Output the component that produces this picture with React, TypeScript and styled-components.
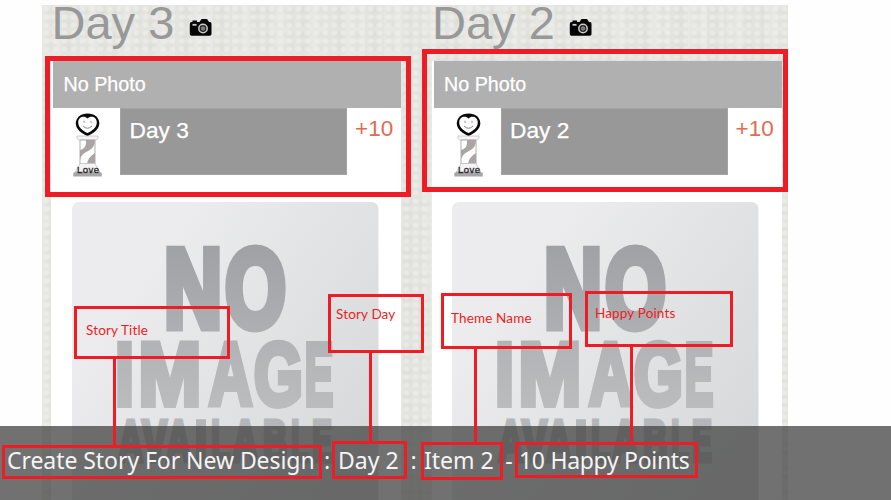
import React from "react";
import styled, { createGlobalStyle } from "styled-components";

const RED = "#ee1c25";

const GlobalStyle = createGlobalStyle`
  html, body { margin: 0; padding: 0; background: #fff; }
  * { box-sizing: border-box; }
`;

const Page = styled.main`
  position: relative;
  width: 891px;
  height: 500px;
  overflow: hidden;
  background: #fefefe;
  padding: 5px 0 0 42px;
  font-family: "Liberation Sans", Arial, sans-serif;
`;

const Board = styled.section`
  width: 746px;
  height: 495px;
  padding-left: 9px;
  display: flex;
  gap: 30.5px;
  overflow: hidden;
  background-color: #e3e4df;
  background-image:
    radial-gradient(ellipse at 50% 50%, rgba(240, 240, 236, 0.6) 0 25%, transparent 65%),
    radial-gradient(ellipse at 50% 50%, rgba(214, 215, 207, 0.35) 0 25%, transparent 65%),
    linear-gradient(90deg, rgba(255, 255, 255, 0.14) 50%, transparent 50%);
  background-size: 9px 8px, 17px 12px, 38px 38px;
`;

const Column = styled.article`
  width: 350px;
  flex: none;
  display: flex;
  flex-direction: column;
`;

const Heading = styled.header`
  height: 56px;
  display: flex;
  flex: none;
  padding-left: 0.5px;
`;

const DayTitle = styled.h1`
  margin: -8px 0 0;
  width: 137px;
  font-size: 47px;
  line-height: 52px;
  font-weight: 400;
  color: #989898;
  white-space: nowrap;
`;

const Camera = styled.svg`
  margin-top: 13px;
  width: 23px;
  height: 19px;
  display: block;
`;

const Card = styled.div`
  flex: 1;
  background: #fff;
  padding-left: 2px;
`;

const PhotoBar = styled.div`
  height: 47px;
  background: #b0b0b0;
  color: #fff;
  padding-left: 10.5px;
  font-size: 19.7px;
  line-height: 46px;
  -webkit-text-stroke: 0.25px #fff;
`;

const StoryRow = styled.div`
  display: flex;
  height: 94px;
`;

const Trophy = styled.svg`
  width: 67px;
  height: 70px;
  flex: none;
`;

const Story = styled.div`
  width: 227px;
  height: 67px;
  background: #989898;
  border: 1px solid #a3a3a3;
  color: #fff;
  padding-left: 8.5px;
  font-size: 22.7px;
  line-height: 43px;
  -webkit-text-stroke: 0.25px #fff;
`;

const Points = styled.div`
  padding-left: 8px;
  font-size: 22.5px;
  line-height: 42px;
  color: #df6a55;
`;

const Placeholder = styled.svg`
  display: block;
  margin-left: 17.5px;
  width: 308px;
  height: 298px;
`;

const Caption = styled.footer`
  position: absolute;
  left: 0;
  right: 0;
  top: 426px;
  height: 74px;
  background: rgba(70, 70, 70, 0.77);
  display: flex;
  align-items: flex-start;
  color: #f4f4f4;
  font-family: "Noto Sans", Tahoma, sans-serif;
  font-size: 23px;
  white-space: pre;
`;

const Part = styled.span<{ $w: number; $h: number; $top: number; $left: number; $pad: number; $ls: number }>`
  flex: none;
  width: ${(p) => p.$w}px;
  height: ${(p) => p.$h}px;
  margin: ${(p) => p.$top}px 0 0 ${(p) => p.$left}px;
  padding-left: ${(p) => p.$pad}px;
  border: 3px solid ${RED};
  line-height: ${(p) => 62 - 2 * p.$top}px;
  letter-spacing: ${(p) => p.$ls}px;
`;

const Divider = styled.span<{ $w: number }>`
  flex: none;
  width: ${(p) => p.$w}px;
  text-align: center;
  line-height: 68px;
`;

const Outline = styled.div<{ $x: number; $y: number; $w: number; $h: number }>`
  position: absolute;
  left: ${(p) => p.$x}px;
  top: ${(p) => p.$y}px;
  width: ${(p) => p.$w}px;
  height: ${(p) => p.$h}px;
  border: 5px solid ${RED};
`;

const Note = styled(Outline)<{ $px: number; $py: number }>`
  border-width: 3px;
  padding: ${(p) => p.$py}px 0 0 ${(p) => p.$px}px;
  color: ${RED};
  font: 13.5px/16px Lato, Calibri, sans-serif;
  letter-spacing: 0.15px;
  white-space: nowrap;
`;

const Connector = styled.div<{ $x: number; $y: number; $h: number }>`
  position: absolute;
  left: ${(p) => p.$x}px;
  top: ${(p) => p.$y}px;
  width: 3px;
  height: ${(p) => p.$h}px;
  background: ${RED};
`;

type Glyph = { c: string; x: number; w: number };
const BIG: { top: number; h: number; fill: string; weight: number; glyphs: Glyph[] }[] = [
  { top: 43, h: 86, fill: "url(#ink1)", weight: 8, glyphs: [{ c: "N", x: 95.5, w: 53 }, { c: "O", x: 154.5, w: 60 }] },
  {
    top: 139, h: 67, fill: "url(#ink2)", weight: 7,
    glyphs: [
      { c: "I", x: 46.5, w: 14.5 }, { c: "M", x: 70, w: 58 }, { c: "A", x: 136.5, w: 46 },
      { c: "G", x: 183.5, w: 46 }, { c: "E", x: 235, w: 27 },
    ],
  },
  {
    top: 217, h: 45, fill: "#b5b6b9", weight: 9,
    glyphs: [
      { c: "A", x: 46, w: 27 }, { c: "V", x: 70, w: 27 }, { c: "A", x: 94, w: 27 }, { c: "I", x: 125, w: 10 },
      { c: "L", x: 141, w: 18 }, { c: "A", x: 160, w: 28 }, { c: "B", x: 193, w: 23 }, { c: "L", x: 221, w: 17 },
      { c: "E", x: 242, w: 19 },
    ],
  },
];

/* left bearing and ink width of the bold capitals, in em */
const METRICS: Record<string, [number, number]> = {
  N: [0.069, 0.585], O: [0.043, 0.691], I: [0.068, 0.144], M: [0.067, 0.7], A: [0.012, 0.699],
  G: [0.042, 0.664], E: [0.067, 0.56], V: [0.012, 0.645], L: [0.067, 0.5], B: [0.067, 0.61],
};

const NoImage = () => (
  <Placeholder viewBox="0 0 308 298">
    <defs>
      <linearGradient id="paper" x1="0" y1="0" x2="1" y2="0.75">
        <stop offset="0.25" stopColor="#ececee" />
        <stop offset="1" stopColor="#d6d8da" />
      </linearGradient>
      <linearGradient id="ink1" x1="0" y1="0" x2="0" y2="1">
        <stop offset="0.1" stopColor="#9fa0a4" />
        <stop offset="1" stopColor="#b0b2b5" />
      </linearGradient>
      <linearGradient id="ink2" x1="0" y1="0" x2="0" y2="1">
        <stop offset="0.1" stopColor="#b0b2b5" />
        <stop offset="1" stopColor="#bcbec0" />
      </linearGradient>
    </defs>
    <rect x="1" width="306.500" height="320" rx="7" fill="url(#paper)" />
    {BIG.map((row) =>
      row.glyphs.map((g, i) => {
        const [lsb, ink] = METRICS[g.c];
        const sw = g.c === "I" ? 2 : row.weight;
        const sy = row.h / (68.8 + sw);
        const sx = g.w / (ink * 100 + sw);
        const tx = g.x - (lsb * 100 - sw / 2) * sx;
        const ty = row.top + row.h - (sw / 2) * sy;
        return (
          <text
            key={`${row.top}-${i}`}
            transform={`translate(${tx} ${ty}) scale(${sx} ${sy})`}
            fontFamily="Liberation Sans, Arial, sans-serif"
            fontWeight="700"
            fontSize="100"
            fill={row.fill}
            stroke={row.fill}
            strokeWidth={sw}
            strokeMiterlimit={2}
          >
            {g.c}
          </text>
        );
      })
    )}
  </Placeholder>
);

const CameraIcon = () => (
  <Camera viewBox="0 0 23 19">
    <path d="M.8 6Q.8 4 2.500 4H3.500V2.500H8V4h2.500l2-3h5.500l2 3h1q1.500 0 1.500 1.800V16q0 1.800-1.800 1.800H2.500Q.8 17.800.8 16Z" fill="#050505" />
    <circle cx="14" cy="10.500" r="4.200" fill="#222" stroke="#ccc" strokeWidth="1.500" />
    <circle cx="14" cy="10.500" r="1.700" fill="#666" stroke="#aaa" strokeWidth=".8" />
    <path d="M3.500 6.800h4" stroke="#ccc" strokeWidth="1.800" />
  </Camera>
);

const TrophyIcon = () => (
  <Trophy viewBox="0 0 67 70">
    <path d="M34.500 5.500c7 0 11.800 4 11.800 10 0 5.500-6 10-11.800 12.700C28.500 25.500 22.800 21 22.800 15.500c0-6 5-10 11.700-10Z" fill="#090909" />
    <path d="M34.500 10.500c3-3.500 9.300-2 9.300 4 0 5-4.800 8.500-9.300 10.500-4.500-2-9.300-5.500-9.300-10.500 0-6 6.300-7.500 9.300-4Z" fill="#fff" />
    <path d="M30 18q4.500 4.500 9 0M31 12.800v2M38 12.800v2" fill="none" stroke="#888" />
    <path d="M24 28h21q1 3-2 4H26q-3-1-2-4Z" fill="#f4f4f4" stroke="#c4c4c4" strokeWidth=".8" />
    <path d="M27 32h15v24H27Z" fill="#fff" stroke="#999" strokeWidth=".8" />
    <path d="M33 32h9q0 8-7 11-6 2.500-8 8v-9q7-1.500 6-10ZM42 45v11h-8q1-7 8-11Z" fill="#aba4a5" />
    <path d="M27 55.500h15l5 9H22Z" fill="#f4f4f4" stroke="#c4c4c4" strokeWidth=".8" />
    <path d="M20.300 68.500v-3.500l3-1.500h22.500l3 1.500v3.500Z" fill="#a6a6a6" />
    <text x="24" y="65.300" fontFamily="Liberation Sans, Arial, sans-serif" fontSize="9.500" textLength="22" fill="#222" stroke="#222" strokeWidth=".3">Love</text>
  </Trophy>
);

const DayColumn = ({ day }: { day: string }) => (
  <Column>
    <Heading>
      <DayTitle>{day}</DayTitle>
      <CameraIcon />
    </Heading>
    <Card>
      <PhotoBar>No Photo</PhotoBar>
      <StoryRow>
        <TrophyIcon />
        <Story>{day}</Story>
        <Points>+10</Points>
      </StoryRow>
      <NoImage />
    </Card>
  </Column>
);

export default function App() {
  return (
    <Page>
      <GlobalStyle />
      <Board>
        <DayColumn day="Day 3" />
        <DayColumn day="Day 2" />
      </Board>
      <Caption>
        <Part $w={320} $h={34} $top={19} $left={2} $pad={2} $ls={-0.06}>Create Story For New Design</Part>
        <Divider $w={10}>:</Divider>
        <Part $w={75} $h={38} $top={15} $left={0} $pad={3} $ls={0}>Day 2</Part>
        <Divider $w={13}>:</Divider>
        <Part $w={82} $h={38} $top={16} $left={1} $pad={0} $ls={0}>Item 2</Part>
        <Divider $w={12}>-</Divider>
        <Part $w={183} $h={36} $top={16} $left={0} $pad={1} $ls={-0.3}>10 Happy Points</Part>
      </Caption>
      <Outline $x={45} $y={56} $w={366} $h={141} />
      <Outline $x={422} $y={49} $w={366} $h={143} />
      <Note $x={74} $y={306} $w={156} $h={53} $px={9} $py={13}>Story Title</Note>
      <Note $x={328} $y={294} $w={96} $h={59} $px={5} $py={9}>Story Day</Note>
      <Note $x={441} $y={293} $w={131} $h={56} $px={7} $py={14}>Theme Name</Note>
      <Note $x={585} $y={291} $w={148} $h={56} $px={7} $py={11}>Happy Points</Note>
      <Connector $x={113} $y={358} $h={88} />
      <Connector $x={369} $y={352} $h={90} />
      <Connector $x={474} $y={348} $h={94} />
      <Connector $x={630} $y={346} $h={96} />
    </Page>
  );
}
